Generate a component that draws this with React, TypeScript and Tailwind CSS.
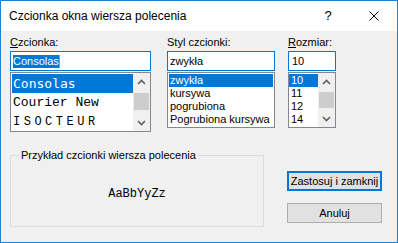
import { ReactNode } from "react";

function ChevronUp() {
  return (
    <svg width="9" height="6" viewBox="0 0 9 6" className="block">
      <polyline points="1,5 4.5,1.5 8,5" fill="none" stroke="#606060" strokeWidth="1.6" />
    </svg>
  );
}

function ChevronDown() {
  return (
    <svg width="9" height="6" viewBox="0 0 9 6" className="block">
      <polyline points="1,1 4.5,4.5 8,1" fill="none" stroke="#606060" strokeWidth="1.6" />
    </svg>
  );
}

function ScrollBar({ thumbTop, thumbHeight }: { thumbTop: number; thumbHeight: number }) {
  return (
    <div className="w-[17px] h-full bg-[#f0f0f0] flex flex-col">
      <div className="h-[17px] flex items-center justify-center">
        <ChevronUp />
      </div>
      <div className="flex-1 flex flex-col">
        <div style={{ height: thumbTop }} />
        <div className="bg-[#cdcdcd] mx-[1px]" style={{ height: thumbHeight }} />
      </div>
      <div className="h-[17px] flex items-center justify-center">
        <ChevronDown />
      </div>
    </div>
  );
}

function Label({ accel, rest }: { accel: string; rest: string }) {
  return (
    <div className="h-[13px] leading-[13px] text-[11px] text-black">
      <span className="underline underline-offset-[1px]">{accel}</span>
      {rest}
    </div>
  );
}

function Input({ children, pad = "pl-[2px]" }: { children: ReactNode; pad?: string }) {
  return (
    <div className={`mt-[2px] h-[20px] border border-[#0078d7] bg-white flex items-center text-[11px] text-black ${pad}`}>
      {children}
    </div>
  );
}

export default function App() {
  return (
    <div className="w-[398px] h-[243px] border border-[#1883d7] bg-[#f0f0f0] flex flex-col font-['Liberation_Sans',Arial,sans-serif] text-black overflow-hidden">
      {/* title bar */}
      <div className="h-[30px] bg-white flex items-center shrink-0">
        <div className="pl-[8px] text-[12px] leading-none">Czcionka okna wiersza polecenia</div>
        <div className="ml-auto flex h-full">
          <div className="w-[46px] h-full flex items-center justify-center text-[13px]">?</div>
          <div className="w-[46px] h-full flex items-center justify-center">
            <svg width="10" height="10" viewBox="0 0 10 10">
              <path d="M0.5 0.5 L9.5 9.5 M9.5 0.5 L0.5 9.5" stroke="#000" strokeWidth="1" />
            </svg>
          </div>
        </div>
      </div>

      <div className="flex-1 pl-[9px] pt-[5px]">
        <div className="flex">
          {/* font */}
          <div className="w-[141px]">
            <Label accel="C" rest="zcionka:" />
            <Input>
              <span className="relative bg-[#0078d7] text-white leading-[13px]">
                Consolas
                <span className="absolute right-[-1px] top-0 w-[1px] h-[13px] bg-[#ff8728]" />
              </span>
            </Input>
            <div className="mt-[1px] h-[60px] border border-[#828790] bg-white flex">
              <div className="flex-1 pt-[1px] pl-[1px]">
                <div className="h-[19px] bg-[#0078d7] text-white pl-[1px] flex items-center text-[13px] font-['DejaVu_Sans_Mono',monospace]">
                  Consolas
                </div>
                <div className="h-[19px] pl-[1px] flex items-center text-[13px] font-['Liberation_Mono',monospace]">
                  Courier New
                </div>
                <div className="h-[19px] pl-[1px] flex items-center text-[12px] tracking-[3.5px] font-['Liberation_Mono',monospace]">
                  ISOCTEUR
                </div>
              </div>
              <ScrollBar thumbTop={3} thumbHeight={17} />
            </div>
          </div>

          {/* style */}
          <div className="w-[108px] ml-[16px]">
            <div className="h-[13px] leading-[13px] text-[11px]">Styl czcionki:</div>
            <Input>zwykła</Input>
            <div className="mt-[1px] h-[56px] border border-[#828790] bg-white pt-[1px] text-[11px]">
              <div className="h-[13px] leading-[13px] mx-[1px] pl-[1px] bg-[#0078d7] text-white">zwykła</div>
              <div className="h-[13px] leading-[13px] pl-[2px]">kursywa</div>
              <div className="h-[13px] leading-[13px] pl-[2px]">pogrubiona</div>
              <div className="h-[13px] leading-[13px] pl-[2px]">Pogrubiona kursywa</div>
            </div>
          </div>

          {/* size */}
          <div className="w-[48px] ml-[13px]">
            <Label accel="R" rest="ozmiar:" />
            <Input pad="pl-[3px]">10</Input>
            <div className="mt-[1px] h-[56px] border border-[#828790] bg-white flex">
              <div className="flex-1 pt-[1px] text-[11px]">
                <div className="h-[13px] leading-[13px] bg-[#0078d7] text-white pl-[2px]">10</div>
                <div className="h-[13px] leading-[13px] pl-[2px]">11</div>
                <div className="h-[13px] leading-[13px] pl-[2px]">12</div>
                <div className="h-[13px] leading-[13px] pl-[2px]">14</div>
              </div>
              <ScrollBar thumbTop={2} thumbHeight={16} />
            </div>
          </div>
        </div>

        <div className="flex mt-[17px]">
          <fieldset className="w-[254px] h-[78px] border border-[#dcdcdc]">
            <legend className="ml-[8px] px-[2px] text-[11px] leading-[13px]">
              Przykład czcionki wiersza polecenia
            </legend>
            <div className="h-[63px] flex items-center justify-center text-[12px] font-['Liberation_Mono',monospace]">
              AaBbYyZz
            </div>
          </fieldset>

          <div className="ml-[23px] pt-[22px] flex flex-col gap-[12px] w-[95px]">
            <button className="h-[20px] border-2 border-[#0078d7] bg-[#e1e1e1] text-[11px] leading-none">
              Zastosuj i zamknij
            </button>
            <button className="h-[20px] border border-[#adadad] bg-[#e1e1e1] text-[11px] leading-none">
              Anuluj
            </button>
          </div>
        </div>
      </div>
    </div>
  );
}
